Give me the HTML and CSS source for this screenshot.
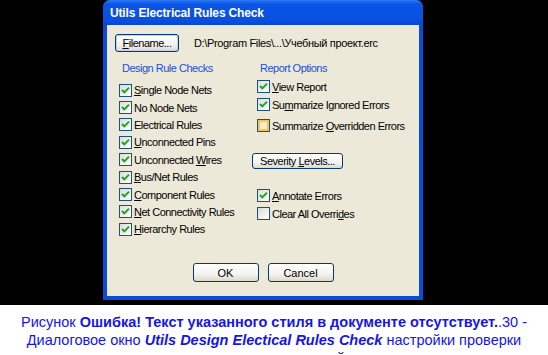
FILE: index.html
```html
<!DOCTYPE html>
<html>
<head>
<meta charset="utf-8">
<link rel="stylesheet" href="styles.css">
</head>
<body>
<div class="stage">
  <div class="dialog">
    <div class="titlebar">Utils Electrical Rules Check</div>
    <div class="body">
      <div class="file-row">
        <div class="btn btn-file"><span><u>F</u>ilename...</span></div>
        <div class="path">D:\Program Files\...\Учебный проект.erc</div>
      </div>
      <div class="columns">
        <div class="col col-left">
          <div class="group-label">Design Rule Checks</div>
          <div class="check on"><span class="box"><svg viewBox="0 0 11 11"><path d="M2 5 L4.3 7.4 L9 2.6" /></svg></span><span><u>S</u>ingle Node Nets</span></div>
          <div class="check on"><span class="box"><svg viewBox="0 0 11 11"><path d="M2 5 L4.3 7.4 L9 2.6" /></svg></span><span>No Node Nets</span></div>
          <div class="check on"><span class="box"><svg viewBox="0 0 11 11"><path d="M2 5 L4.3 7.4 L9 2.6" /></svg></span><span>Electrical Rules</span></div>
          <div class="check on"><span class="box"><svg viewBox="0 0 11 11"><path d="M2 5 L4.3 7.4 L9 2.6" /></svg></span><span><u>U</u>nconnected Pins</span></div>
          <div class="check on"><span class="box"><svg viewBox="0 0 11 11"><path d="M2 5 L4.3 7.4 L9 2.6" /></svg></span><span>Unconnected <u>W</u>ires</span></div>
          <div class="check on"><span class="box"><svg viewBox="0 0 11 11"><path d="M2 5 L4.3 7.4 L9 2.6" /></svg></span><span><u>B</u>us/Net Rules</span></div>
          <div class="check on"><span class="box"><svg viewBox="0 0 11 11"><path d="M2 5 L4.3 7.4 L9 2.6" /></svg></span><span><u>C</u>omponent Rules</span></div>
          <div class="check on"><span class="box"><svg viewBox="0 0 11 11"><path d="M2 5 L4.3 7.4 L9 2.6" /></svg></span><span><u>N</u>et Connectivity Rules</span></div>
          <div class="check on"><span class="box"><svg viewBox="0 0 11 11"><path d="M2 5 L4.3 7.4 L9 2.6" /></svg></span><span><u>H</u>ierarchy Rules</span></div>
        </div>
        <div class="col col-right">
          <div class="group-label">Report Options</div>
          <div class="check on r1"><span class="box"><svg viewBox="0 0 11 11"><path d="M2 5 L4.3 7.4 L9 2.6" /></svg></span><span><u>V</u>iew Report</span></div>
          <div class="check on r2"><span class="box"><svg viewBox="0 0 11 11"><path d="M2 5 L4.3 7.4 L9 2.6" /></svg></span><span>Su<u>m</u>marize Ignored Errors</span></div>
          <div class="check hover r3"><span class="box"></span><span>Summarize <u>O</u>verridden Errors</span></div>
          <div class="btn btn-sev"><span>Severity <u>L</u>evels...</span></div>
          <div class="check on r4"><span class="box"><svg viewBox="0 0 11 11"><path d="M2 5 L4.3 7.4 L9 2.6" /></svg></span><span><u>A</u>nnotate Errors</span></div>
          <div class="check r5"><span class="box"></span><span>Clear All Overri<u>d</u>es</span></div>
        </div>
      </div>
      <div class="actions">
        <div class="btn btn-act"><span>OK</span></div>
        <div class="btn btn-act"><span>Cancel</span></div>
      </div>
    </div>
  </div>
</div>
<div class="caption">
  <p>Рисунок <b>Ошибка! Текст указанного стиля в документе отсутствует.</b>.30 -</p>
  <p>Диалоговое окно <b><i>Utils Design Electical Rules Check</i></b> настройки проверки</p>
  <p>электрических цепей</p>
</div>
</body>
</html>
```
FILE: styles.css
```css
* { box-sizing: border-box; }
html, body { margin: 0; padding: 0; }
body {
  width: 548px;
  height: 355px;
  overflow: hidden;
  background: #000;
  font-family: "Liberation Sans", Arial, sans-serif;
}
.stage {
  height: 305px;
  padding-left: 103px;
}
.dialog {
  width: 320px;
  height: 300px;
  background: #0A4BDC;
  border-radius: 7px 7px 0 0;
  padding: 0 4px 4px 4px;
  display: flex;
  flex-direction: column;
}
.titlebar {
  height: 25px;
  flex: none;
  color: #fff;
  font-weight: bold;
  font-size: 12px;
  letter-spacing: -0.15px;
  line-height: 27px;
  background: linear-gradient(#2F7BF4 0px, #0A55E6 4px, #0A50E0 20px, #0747D4 25px);
  margin: 0 -4px;
  padding-left: 7px;
  border-radius: 7px 7px 0 0;
}
.body {
  flex: 1;
  background: #ECE9D8;
  font-size: 11px;
  letter-spacing: -0.5px;
  color: #000;
  padding: 9px 0 0 8px;
  display: flex;
  flex-direction: column;
}
.btn {
  border: 1px solid #003C74;
  border-radius: 3px;
  background: linear-gradient(#FFFFFF, #F4F3EE 60%, #DCD9CD);
  display: flex;
  align-items: center;
  justify-content: center;
  color: #000;
}
.file-row {
  display: flex;
  align-items: center;
  height: 18px;
}
.btn-file {
  width: 64px;
  height: 18px;
  box-shadow: inset 0 0 0 1px #C0D0F0;
}
.path {
  margin-left: 15px;
  letter-spacing: -0.35px;
}
.columns {
  display: grid;
  grid-template-columns: 138px 1fr;
  margin-top: 10px;
  padding-left: 4px;
}
.col { display: flex; flex-direction: column; }
.group-label {
  color: #1A4FD8;
  height: 12px;
  line-height: 12px;
  padding-left: 3px;
}
.col-left .group-label { margin-bottom: 7.5px; }
.check {
  display: flex;
  align-items: center;
  height: 17.4px;
  gap: 2px;
}
.box {
  width: 13px;
  height: 13px;
  border: 1px solid #1C5180;
  background: linear-gradient(135deg, #DCDCD7, #FFFFFF);
  display: flex;
  align-items: center;
  justify-content: center;
  flex: none;
}
.box svg { width: 11px; height: 11px; }
.box path {
  fill: none;
  stroke: #21A121;
  stroke-width: 2;
}
.check.hover .box {
  box-shadow: inset 0 0 0 2px #F9C15A;
  background: #FDEBC4;
}
.col-right .group-label { margin-bottom: 4px; }
.r2 { margin-top: 0.6px; }
.r3 { margin-top: 3.6px; }
.btn-sev {
  width: 91px;
  height: 16px;
  margin-left: -5px;
  margin-top: 18.5px;
}
.r4 { margin-top: 18px; }
.r5 { margin-top: 0.8px; }
.actions {
  display: flex;
  justify-content: center;
  gap: 9px;
  margin-top: auto;
  margin-bottom: 14px;
  margin-left: -8px;
}
.btn-act {
  width: 66px;
  height: 19px;
  letter-spacing: 0;
}
.caption {
  background: #fff;
  height: 50px;
  color: #1515E8;
  font-size: 14.5px;
  text-align: center;
  padding-top: 8px;
}
.caption p {
  margin: 0;
  line-height: 18px;
  white-space: nowrap;
}
```
